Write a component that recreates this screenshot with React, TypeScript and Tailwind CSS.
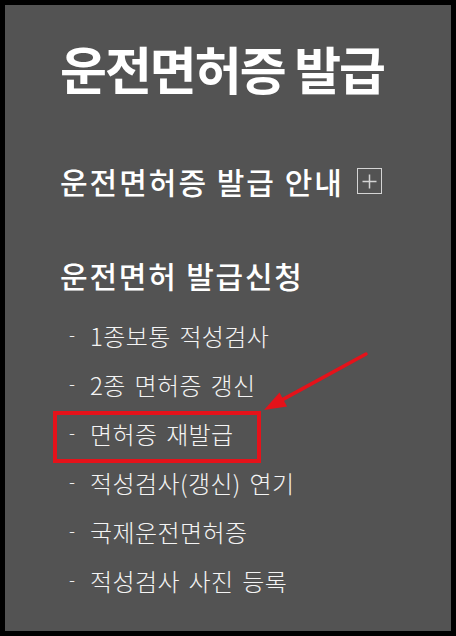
import React from "react";

const items = [
  "1종보통 적성검사",
  "2종 면허증 갱신",
  "면허증 재발급",
  "적성검사(갱신) 연기",
  "국제운전면허증",
  "적성검사 사진 등록",
];

export default function App() {
  return (
    <div
      className="relative w-[456px] h-[636px] bg-black p-[5px]"
      style={{ fontFamily: '"Noto Sans CJK KR", "Noto Sans", sans-serif' }}
    >
      <div className="h-full bg-[#535353] pl-[55px] pt-[33px] flex flex-col text-white">
        <div className="h-[60px] flex items-center text-[51px] font-bold leading-none tracking-[-2px]">
          운전면허증 발급
        </div>
        <div className="mt-[63px] h-[40px] flex items-center gap-[13px] text-[30px] font-medium leading-none">
          <span className="tracking-[2px]">운전면허증 발급 안내</span>
          <span className="w-[25px] h-[26px] border-[1.5px] border-[#d4d4d4] flex items-center justify-center">
            <svg width="17" height="17" viewBox="0 0 17 17">
              <path d="M8.5 1.5V15.5M1.5 8.5H15.5" stroke="#d4d4d4" strokeWidth="1.5" />
            </svg>
          </span>
        </div>
        <div className="mt-[54px] h-[40px] flex items-center text-[30px] font-medium leading-none tracking-[1.8px]">
          운전면허 발급신청
        </div>
        <div className="mt-[16px] flex flex-col">
          {items.map((t) => (
            <div key={t} className="h-[49px] flex items-center pl-[9px] text-[24px] font-light leading-none text-[#f4f4f4]">
              <span className="w-[21px] text-[18px] -mt-[6px]">-</span>
              <span className="tracking-[0.4px] [word-spacing:3px]">{t}</span>
            </div>
          ))}
        </div>
      </div>
      <div className="absolute left-[53px] top-[411px] w-[208px] h-[52px] border-[4px] border-[#e5121a]" />
      <svg className="absolute left-0 top-0" width="456" height="636" viewBox="0 0 456 636">
        <line x1="366" y1="354" x2="283" y2="399.4" stroke="#e5121a" strokeWidth="3.5" strokeLinecap="round" />
        <polygon points="264,410 287.1,406.4 279.5,392.4" fill="#e5121a" />
      </svg>
    </div>
  );
}
